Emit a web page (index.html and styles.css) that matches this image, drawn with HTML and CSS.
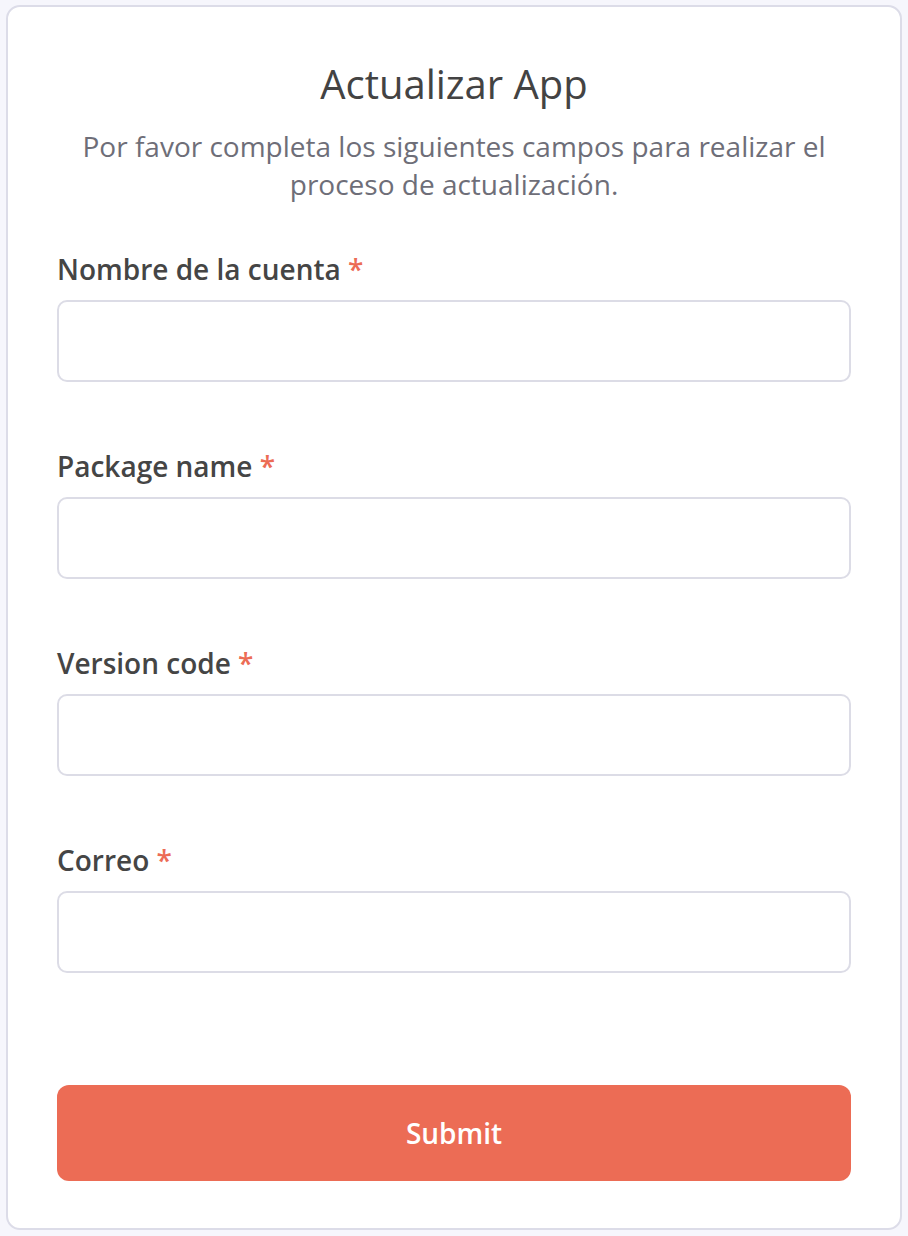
FILE: index.html
```html
<!DOCTYPE html>
<html lang="es">
<head>
<meta charset="utf-8">
<title>Actualizar App</title>
<link rel="stylesheet" href="styles.css">
</head>
<body>
<div class="card">
  <h1 class="title">Actualizar App</h1>
  <p class="subtitle">Por favor completa los siguientes campos para realizar el proceso de actualización.</p>
  <form class="form">
    <div class="field">
      <label class="label">Nombre de la cuenta <span class="req">*</span></label>
      <input class="input" type="text">
    </div>
    <div class="field">
      <label class="label">Package name <span class="req">*</span></label>
      <input class="input" type="text">
    </div>
    <div class="field">
      <label class="label">Version code <span class="req">*</span></label>
      <input class="input" type="text">
    </div>
    <div class="field">
      <label class="label">Correo <span class="req">*</span></label>
      <input class="input" type="text">
    </div>
    <button class="submit" type="button">Submit</button>
  </form>
</div>
</body>
</html>
```
FILE: styles.css
```css
html, body {
  margin: 0;
  padding: 0;
  background: #f6f6fc;
  font-family: "Open Sans", "Noto Sans", sans-serif;
}
body {
  padding: 5px 6px 6px 6px;
}
.card {
  box-sizing: border-box;
  width: 896px;
  height: 1225px;
  background: #ffffff;
  border: 2px solid #dcdce8;
  border-radius: 14px;
  padding: 53px 49px 0 49px;
}
.title {
  margin: 0;
  text-align: center;
  font-size: 40px;
  line-height: 48px;
  font-weight: 400;
  color: #434343;
}
.subtitle {
  margin: 19px 0 0 0;
  text-align: center;
  font-size: 28px;
  line-height: 38px;
  color: #6e6e78;
}
.form {
  margin-top: 48px;
  display: flex;
  flex-direction: column;
}
.field {
  display: flex;
  flex-direction: column;
  gap: 13px;
  margin-bottom: 66px;
}
.label {
  font-size: 28px;
  line-height: 36px;
  font-weight: 600;
  color: #454545;
}
.req {
  color: #ec6c55;
}
.input {
  box-sizing: border-box;
  height: 82px;
  width: 100%;
  border: 2px solid #dcdce6;
  border-radius: 10px;
  background: #fff;
  outline: none;
}
.submit {
  margin-top: 46px;
  height: 96px;
  width: 100%;
  border: none;
  border-radius: 12px;
  background: #ec6c55;
  color: #ffffff;
  font-family: "Open Sans", "Noto Sans", sans-serif;
  font-size: 28px;
  font-weight: 600;
}
```
